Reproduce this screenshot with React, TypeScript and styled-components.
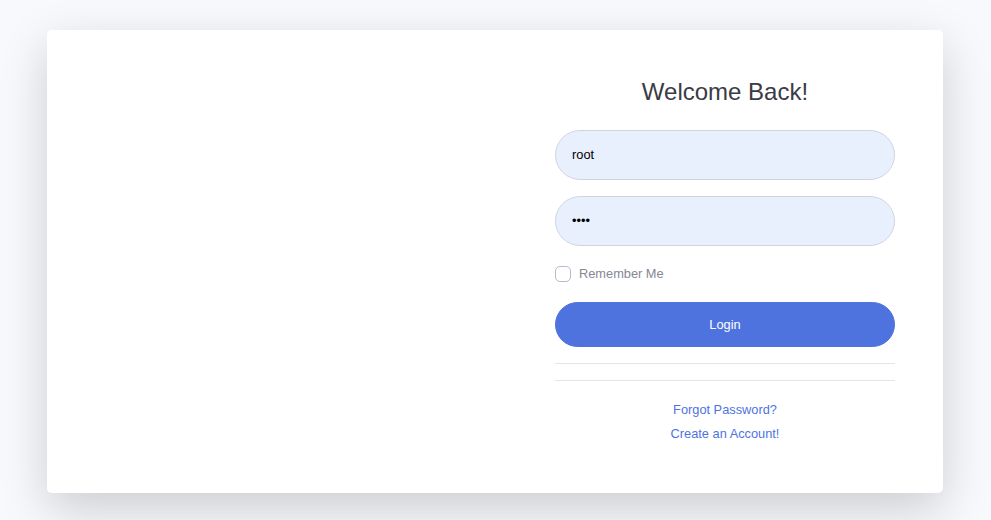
import React from "react";
import styled, { createGlobalStyle } from "styled-components";

const GlobalStyle = createGlobalStyle`
  html, body {
    margin: 0;
    padding: 0;
    background: #f8f9fc;
    font-family: "Liberation Sans", Arial, sans-serif;
  }
  * { box-sizing: border-box; }
`;

const Page = styled.div`
  min-height: 520px;
  background: #f8f9fc;
  padding: 30px 0 0 47px;
  display: flex;
  align-items: flex-start;
`;

const Card = styled.div`
  width: 896px;
  background: #fff;
  border-radius: 5px;
  box-shadow: 0 1rem 3rem rgba(0, 0, 0, 0.175);
  display: grid;
  grid-template-columns: 448px 448px;
  overflow: hidden;
`;

const ImagePane = styled.div`
  background: #fff;
`;

const FormPane = styled.div`
  padding: 48px 48px 47px 60px;
  display: flex;
  flex-direction: column;
`;

const Title = styled.h1`
  margin: 0 0 23px;
  font-size: 24px;
  line-height: 28.8px;
  font-weight: 400;
  color: #3a3b45;
  text-align: center;
`;

const Form = styled.form`
  display: flex;
  flex-direction: column;
  margin: 0;
`;

const Input = styled.input`
  display: block;
  width: 100%;
  height: 50px;
  margin: 0 0 16px;
  padding: 0 16px;
  font-family: "Liberation Sans", Arial, sans-serif;
  font-size: 12.8px;
  color: #000;
  background: #e8f0fe;
  border: 1px solid #d1d3e2;
  border-radius: 10rem;
  outline: none;
`;

const CheckRow = styled.label`
  display: flex;
  align-items: center;
  gap: 8px;
  height: 24px;
  margin-bottom: 16px;
  font-size: 12.8px;
  color: #858796;
  cursor: pointer;
`;

const CheckBox = styled.span`
  width: 16px;
  height: 16px;
  border: 1px solid #b7b9cc;
  border-radius: 5px;
  background: #fff;
  flex: none;
`;

const LoginButton = styled.button`
  width: 100%;
  height: 45px;
  border: 1px solid #4e73df;
  border-radius: 10rem;
  background: #4e73df;
  color: #fff;
  font-family: "Liberation Sans", Arial, sans-serif;
  font-size: 12.8px;
  cursor: pointer;
`;

const Divider = styled.hr<{ $top: number }>`
  margin: ${(p) => p.$top}px 0 0;
  border: 0;
  border-top: 1px solid rgba(0, 0, 0, 0.1);
  height: 0;
`;

const Links = styled.div`
  margin-top: 17px;
  display: flex;
  flex-direction: column;
  align-items: center;
`;

const SmallLink = styled.a`
  display: block;
  font-size: 12.8px;
  line-height: 24px;
  color: #4e73df;
  text-decoration: none;
`;

export default function App() {
  return (
    <>
      <GlobalStyle />
      <Page>
        <Card>
          <ImagePane />
          <FormPane>
            <Title>Welcome Back!</Title>
            <Form onSubmit={(e) => e.preventDefault()}>
              <Input type="text" defaultValue="root" />
              <Input type="password" defaultValue="root" />
              <CheckRow>
                <CheckBox />
                Remember Me
              </CheckRow>
              <LoginButton type="submit">Login</LoginButton>
              <Divider $top={16} />
            </Form>
            <Divider $top={16} />
            <Links>
              <SmallLink href="#">Forgot Password?</SmallLink>
              <SmallLink href="#">Create an Account!</SmallLink>
            </Links>
          </FormPane>
        </Card>
      </Page>
    </>
  );
}
